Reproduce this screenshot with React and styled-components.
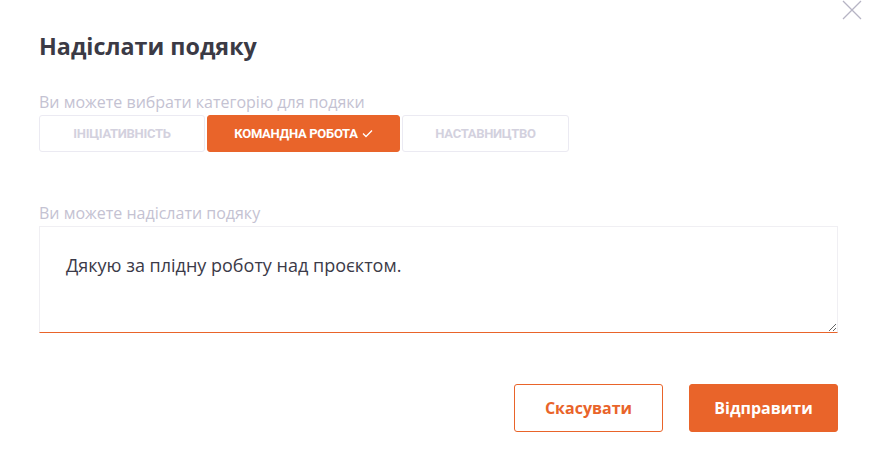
import styled, { createGlobalStyle } from "styled-components";

const GlobalStyle = createGlobalStyle`
	body {
		margin: 0;
		background: #fff;
		font-family: "Open Sans", "Noto Sans", sans-serif;
	}
	* {
		box-sizing: border-box;
	}
`;

const ORANGE = "#e9642a";

const Modal = styled.div`
	position: relative;
	width: 871px;
	height: 458px;
	padding: 28px 33px 0 39px;
`;

const Close = styled.button`
	position: absolute;
	top: 0;
	right: 8px;
	width: 22px;
	height: 22px;
	padding: 0;
	border: none;
	background: none;
	cursor: pointer;
	display: flex;
	align-items: center;
	justify-content: center;
`;

const Title = styled.h2`
	margin: 0;
	font-size: 23.3px;
	font-weight: 700;
	color: #3b3a45;
	line-height: 36px;
`;

const Label = styled.div`
	font-size: 16px;
	color: #c4c2d2;
	line-height: 20px;
	margin-top: ${(p) => p.$top || 0}px;
`;

const Chips = styled.div`
	display: flex;
	gap: 2px;
	margin-top: 3px;
`;

const Chip = styled.button`
	width: ${(p) => p.$w}px;
	height: 37px;
	border-radius: 3px;
	border: 1px solid ${(p) => (p.$active ? ORANGE : "#ebeaf2")};
	background: ${(p) => (p.$active ? ORANGE : "#fff")};
	color: ${(p) => (p.$active ? "#fff" : "#d3d1de")};
	font-family: "Roboto", sans-serif;
	font-weight: 700;
	font-size: 13px;
	letter-spacing: -0.3px;
	text-transform: uppercase;
	display: flex;
	align-items: center;
	justify-content: center;
	gap: 4px;
	padding: 0;
	cursor: pointer;
`;

const TextArea = styled.textarea`
	display: block;
	width: 100%;
	height: 107px;
	margin-top: 3px;
	padding: 26px 26px;
	border: 1px solid #f0eff3;
	border-bottom: 1px solid ${ORANGE};
	border-radius: 0;
	outline: none;
	font-family: "Open Sans", "Noto Sans", sans-serif;
	font-size: 18px;
	color: #3b3a48;
	resize: vertical;
`;

const Footer = styled.div`
	display: flex;
	justify-content: flex-end;
	gap: 26px;
	margin-top: 51px;
`;

const Button = styled.button`
	width: 149px;
	height: 48px;
	border-radius: 3px;
	border: 1px solid ${ORANGE};
	background: ${(p) => (p.$primary ? ORANGE : "#fff")};
	color: ${(p) => (p.$primary ? "#fff" : ORANGE)};
	font-family: "Open Sans", "Noto Sans", sans-serif;
	font-size: 16px;
	font-weight: 700;
	cursor: pointer;
`;

const categories = [
	{ name: "Ініціативність", w: 166 },
	{ name: "Командна робота", w: 193, active: true },
	{ name: "Наставництво", w: 167 },
];

export default function App() {
	return (
		<>
			<GlobalStyle />
			<Modal>
				<Close aria-label="close">
					<svg width="22" height="22" viewBox="0 0 22 22">
						<path
							d="M2 1 L20 19 M20 1 L2 19"
							stroke="#b6b4c4"
							strokeWidth="1.3"
							fill="none"
						/>
					</svg>
				</Close>
				<Title>Надіслати подяку</Title>
				<Label $top={28}>Ви можете вибрати категорію для подяки</Label>
				<Chips>
					{categories.map((c) => (
						<Chip key={c.name} $w={c.w} $active={c.active}>
							{c.name}
							{c.active && (
								<svg width="11" height="9" viewBox="0 0 11 9">
									<path
										d="M1 4.5 L4 7.5 L10 1.5"
										stroke="#fff"
										strokeWidth="1.3"
										fill="none"
									/>
								</svg>
							)}
						</Chip>
					))}
				</Chips>
				<Label $top={51}>Ви можете надіслати подяку</Label>
				<TextArea defaultValue="Дякую за плідну роботу над проєктом." />
				<Footer>
					<Button>Скасувати</Button>
					<Button $primary>Відправити</Button>
				</Footer>
			</Modal>
		</>
	);
}
